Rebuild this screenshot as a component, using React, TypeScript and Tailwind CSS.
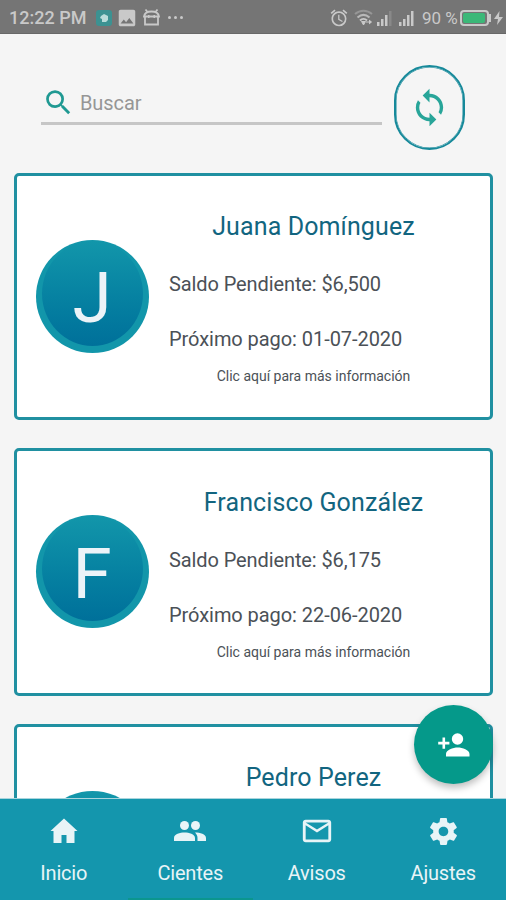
import type { ReactNode } from "react";
import { MdAlarm, MdImage, MdLoop, MdMailOutline, MdSearch } from "react-icons/md";
import { IoMdSettings } from "react-icons/io";

interface Client {
  name: string;
  balance?: string;
  nextPayment?: string;
}

const clients: Client[] = [
  { name: "Juana Domínguez", balance: "$6,500", nextPayment: "01-07-2020" },
  { name: "Francisco González", balance: "$6,175", nextPayment: "22-06-2020" },
  { name: "Pedro Perez" },
];

function SignalBars({ full }: { full: boolean }) {
  return (
    <svg width="15" height="16" viewBox="0 0 15 16" fill="currentColor">
      <path d="M0 12h2.500v4H0zM4 9h2.500v7H4zM8 5h2.500v11H8z" />
      <path d="M12 1h2.500v15H12z" opacity={full ? 1 : 0.25} />
    </svg>
  );
}

function StatusBar() {
  return (
    <header className="flex h-[34px] shrink-0 items-center border-b border-[#686868] bg-[#757575] pl-[9px] pr-[3px] pt-[2px] text-[#c9c9c9]">
      <span className="w-[87px] whitespace-nowrap text-[18px] font-medium leading-none">12:22 PM</span>
      <span className="flex h-[16px] w-[16px] items-center justify-center rounded-[3px] bg-[#3c9292]">
        <svg width="10" height="10" viewBox="0 0 10 10" fill="#b9dcda">
          <path d="M2 3l3-2 4 2v4L7 9H3V6L1 5z" />
        </svg>
      </span>
      <MdImage className="ml-[4px]" size={22} />
      <svg className="ml-[4px]" width="20" height="19" viewBox="0 0 20 19" fill="none" stroke="currentColor" strokeWidth="1.800">
        <path d="M3 8v8.500h13V8M2 8.500C2.500 5 5 3.500 9.500 3.500S16.500 5 17 8.500zM5.500 4L3.500 1.500M13.500 4l2-2.500" />
        <path d="M6 8.500h1.500M11.500 8.500H13" strokeWidth="3" />
      </svg>
      <span className="ml-[6px] flex gap-[3px]">
        <i className="h-[3px] w-[3px] rounded-full bg-[#c9c9c9]" />
        <i className="h-[3px] w-[3px] rounded-full bg-[#c9c9c9]" />
        <i className="h-[3px] w-[3px] rounded-full bg-[#c9c9c9]" />
      </span>
      <div className="ml-auto flex items-center">
        <MdAlarm size={20} />
        <svg className="ml-[5px]" width="20" height="17" viewBox="0 0 20 17" fill="none" stroke="currentColor" strokeWidth="2">
          <path d="M1 5c5-4.500 12-4.500 17 0" opacity=".4" />
          <path d="M3.500 8.500c4-3.500 8-3.500 12 0" opacity=".8" />
          <path d="M6 11.500c2-2 5-2 7 0" />
          <path d="M7.500 12.500h4L9.500 16zM12 13h5M15 11l2.500 2-2.500 2" fill="currentColor" strokeWidth="1" />
        </svg>
        <span className="ml-[3px]"><SignalBars full={false} /></span>
        <span className="ml-[7px]"><SignalBars full /></span>
        <span className="ml-[8px] w-[38px] whitespace-nowrap pt-px text-[17px] leading-none">90 %</span>
        <span className="flex h-[16px] w-[29px] items-center rounded-[4px] border-2 border-[#c9c9c9] p-px">
          <i className="h-full w-[22px] rounded-[2px] bg-[#3bb878]" />
        </span>
        <i className="h-[8px] w-[2px] bg-[#c9c9c9]" />
        <svg className="ml-[3px]" width="9" height="16" viewBox="0 0 9 16" fill="currentColor">
          <path d="M5.500 1L0 9h4L3 15l6-8H5z" />
        </svg>
      </div>
    </header>
  );
}

function SearchRow() {
  return (
    <div className="flex h-[138px] shrink-0 pl-[41px] pt-[31px]">
      <div className="flex h-[60px] w-[341px] items-center border-b-[3px] border-[#c6c6c6] pl-px pt-[18px]">
        <MdSearch className="shrink-0 text-[#1f9992]" size={33} />
        <span className="ml-[5px] text-[20px] leading-none tracking-[-0.100px] text-[#969696]">Buscar</span>
      </div>
      <button className="ml-[12px] flex h-[85px] w-[71px] items-center justify-center rounded-[35.500px] border-[2px] border-[#16899a] text-[#28a599] shadow-[inset_0_0_0_0.500px_#16899a]">
        <MdLoop size={41} />
      </button>
    </div>
  );
}

function Avatar({ letter }: { letter?: string }) {
  return (
    <div className="flex h-[113px] w-[113px] shrink-0 justify-center rounded-full bg-[#1296aa] pt-px">
      <div className="flex h-[105px] w-[101px] items-center justify-center rounded-[50%] bg-linear-to-b from-[#1296aa] to-[#00709a] pt-[9px]">
        {letter && <span className="text-[71px] leading-none text-[#ecf3f8]">{letter}</span>}
      </div>
    </div>
  );
}

function ClientCard({ client }: { client: Client }) {
  return (
    <article className="flex h-[247.500px] w-[479px] shrink-0 items-center rounded-[5px] border-[3px] border-[#2090a1] bg-white pl-[18.500px]">
      <Avatar letter={client.balance && client.name[0]} />
      <div className="ml-[20.500px] flex h-full w-[289px] flex-col whitespace-nowrap text-[#4b5157]">
        <h2 className="mt-[36.500px] text-center text-[25px] leading-[30px] tracking-[0.120px] text-[#126580]">{client.name}</h2>
        {client.balance && (
          <>
            <p className="mt-[30px] text-[20px] leading-[24px] tracking-[-0.100px]">Saldo Pendiente: {client.balance}</p>
            <p className="mt-[31px] text-[20px] leading-[24px] tracking-[-0.060px]">Próximo pago: {client.nextPayment}</p>
            <p className="mt-[16px] text-center text-[14px] leading-[18px]">Clic aquí para más información</p>
          </>
        )}
      </div>
    </article>
  );
}

function HomeIcon() {
  return (
    <svg width="28" height="26" viewBox="0 0 28 26" fill="currentColor">
      <path d="M14 .5L.5 13H3.500v12h8v-8h5v8h8V13h3z" />
    </svg>
  );
}

function PeopleIcon() {
  return (
    <svg width="32" height="22" viewBox="0 0 32 22" fill="currentColor">
      <circle cx="10.500" cy="5.500" r="4.500" />
      <circle cx="21.500" cy="5.500" r="4.500" />
      <path d="M0 21v-3c0-4 6-5.500 10.500-5.500S21 14 21 18v3zM21 12.500c5 0 11 1.500 11 5.500v3h-8.500v-3c0-2.500-1-4-2.500-5.500z" />
    </svg>
  );
}

function PersonAddIcon() {
  return (
    <svg width="32" height="24" viewBox="0 0 32 24" fill="currentColor">
      <circle cx="19.500" cy="6" r="5.700" />
      <path d="M8 23.500v-2.500c0-4 7-6.500 11.700-6.500S31.500 17 31.500 21v2.500zM4.500 4.500h2.600v4.300h4.300v2.600H7.100v4.300H4.500v-4.300H.2V8.800h4.300z" />
    </svg>
  );
}

function NavItem({ icon, label }: { icon: ReactNode; label: string }) {
  return (
    <a className="flex flex-1 flex-col items-center pl-px pt-[14px] text-[#e8f4f7]">
      <span className="flex h-[36px] items-center">{icon}</span>
      <span className="mt-[12px] text-[20px] leading-[24px] tracking-[-0.200px]">{label}</span>
    </a>
  );
}

export default function App() {
  return (
    <div className="relative flex h-[900px] w-[506px] flex-col overflow-hidden bg-[#f5f5f5] font-['Roboto',sans-serif]">
      <StatusBar />
      <SearchRow />
      <main className="flex min-h-0 flex-1 flex-col gap-[28px] overflow-hidden pl-[14px] pt-[0.500px]">
        {clients.map((client) => (
          <ClientCard key={client.name} client={client} />
        ))}
      </main>
      <button className="absolute left-[414px] top-[705px] flex h-[79px] w-[79px] items-center justify-center rounded-full bg-[#05998a] text-white shadow-[0_4px_7px_rgba(0,0,0,0.25)]">
        <PersonAddIcon />
      </button>
      <nav className="relative flex h-[102px] shrink-0 border-t border-[#a9d5dd] bg-[#1496ad]">
        <NavItem icon={<HomeIcon />} label="Inicio" />
        <NavItem icon={<PeopleIcon />} label="Cientes" />
        <NavItem icon={<MdMailOutline size={34} />} label="Avisos" />
        <NavItem icon={<IoMdSettings size={33} />} label="Ajustes" />
        <i className="absolute bottom-0 left-[128px] h-[2px] w-[125px] bg-[#0b968e]" />
      </nav>
    </div>
  );
}
